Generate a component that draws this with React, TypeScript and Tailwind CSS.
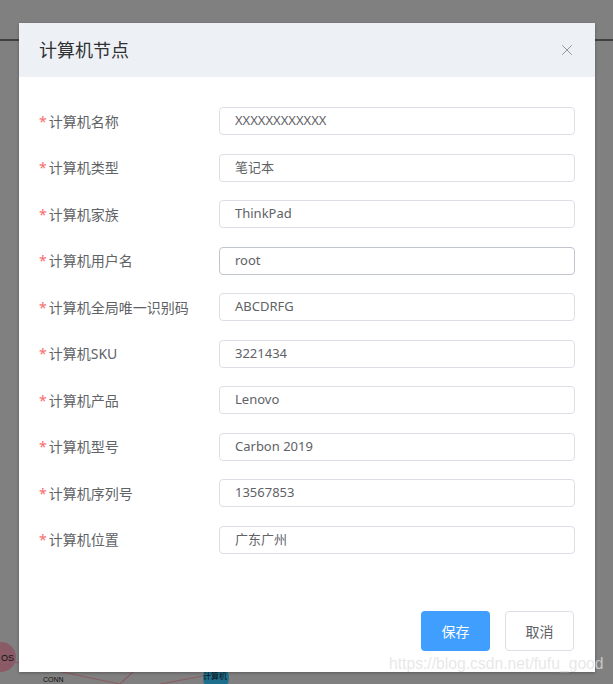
import React from "react";
import { X } from "lucide-react";

const fields: { label: string; value: string; hover?: boolean }[] = [
  { label: "计算机名称", value: "XXXXXXXXXXXX" },
  { label: "计算机类型", value: "笔记本" },
  { label: "计算机家族", value: "ThinkPad" },
  { label: "计算机用户名", value: "root", hover: true },
  { label: "计算机全局唯一识别码", value: "ABCDRFG" },
  { label: "计算机SKU", value: "3221434" },
  { label: "计算机产品", value: "Lenovo" },
  { label: "计算机型号", value: "Carbon 2019" },
  { label: "计算机序列号", value: "13567853" },
  { label: "计算机位置", value: "广东广州" },
];

const font = {
  fontFamily: '"Noto Sans", "Noto Sans CJK SC", sans-serif',
};

const App: React.FC = () => {
  return (
    <div
      className="relative h-[684px] w-[613px] overflow-hidden bg-[#808080]"
      style={font}
    >
      {/* page behind the mask */}
      <div className="absolute left-0 right-0 top-[39px] h-[2px] bg-[#404040]" />
      <svg
        className="absolute left-0 top-[630px]"
        width="613"
        height="54"
        viewBox="0 630 613 54"
      >
        <line x1="14" y1="662" x2="120" y2="684" stroke="#8a5d64" strokeWidth="1.2" />
        <line x1="135" y1="670" x2="120" y2="684" stroke="#8a5d64" strokeWidth="1.2" />
        <line x1="160" y1="684" x2="203" y2="676" stroke="#8a5d64" strokeWidth="1.2" />
        <circle cx="1" cy="657" r="15" fill="#8a5b67" />
        <circle cx="216" cy="678" r="13" fill="#1d6f8d" />
        <text x="1" y="661" fontSize="9" fill="#111" fontFamily="Liberation Sans, sans-serif">OS</text>
        <text x="43" y="682" fontSize="7" fill="#111" fontFamily="Liberation Sans, sans-serif">CONN</text>
        <text x="203" y="679" fontSize="8" fill="#111" fontFamily="Noto Sans CJK SC, sans-serif">计算机</text>
      </svg>

      {/* dialog */}
      <div className="relative ml-[19px] mt-[23px] flex h-[649px] w-[576px] flex-col bg-white shadow-[0_1px_3px_rgba(0,0,0,0.3)]">
        <div className="flex h-[54px] items-center justify-between bg-[#edf0f5] pl-[20px] pr-[19px]">
          <span className="text-[18px] text-[#303133]">计算机节点</span>
          <X className="h-[18px] w-[18px] text-[#909399]" strokeWidth={1.3} />
        </div>

        <div className="flex flex-col gap-y-[18.5px] pl-[20px] pr-[20px] pt-[30px]">
          {fields.map((f) => (
            <div key={f.label} className="flex h-[28px] items-center">
              <div className="w-[180px] text-[14px] text-[#606266]">
                <span className="mr-[2px] text-[#f56c6c]">*</span>
                {f.label}
              </div>
              <div
                className={
                  f.hover
                    ? "flex h-[28px] flex-1 items-center rounded-[4px] border border-[#c0c4cc] px-[15px] text-[13px] text-[#606266]"
                    : "flex h-[28px] flex-1 items-center rounded-[4px] border border-[#dcdfe6] px-[15px] text-[13px] text-[#606266]"
                }
              >
                {f.value}
              </div>
            </div>
          ))}
        </div>

        <div className="mt-auto flex justify-end gap-[15px] pb-[21px] pr-[21px]">
          <button className="h-[40px] w-[69px] rounded-[4px] bg-[#409eff] text-[14px] text-white">
            保存
          </button>
          <button className="h-[40px] w-[69px] rounded-[4px] border border-[#dcdfe6] bg-white text-[14px] text-[#606266]">
            取消
          </button>
        </div>
      </div>

      <div
        className="absolute left-[389px] top-[654px] whitespace-nowrap text-[15.7px] leading-[20px] text-[rgba(224,224,224,0.75)]"
        style={{ fontFamily: '"Liberation Sans", sans-serif' }}
      >
        https://blog.csdn.net/fufu_good
      </div>
    </div>
  );
};

export default App;
